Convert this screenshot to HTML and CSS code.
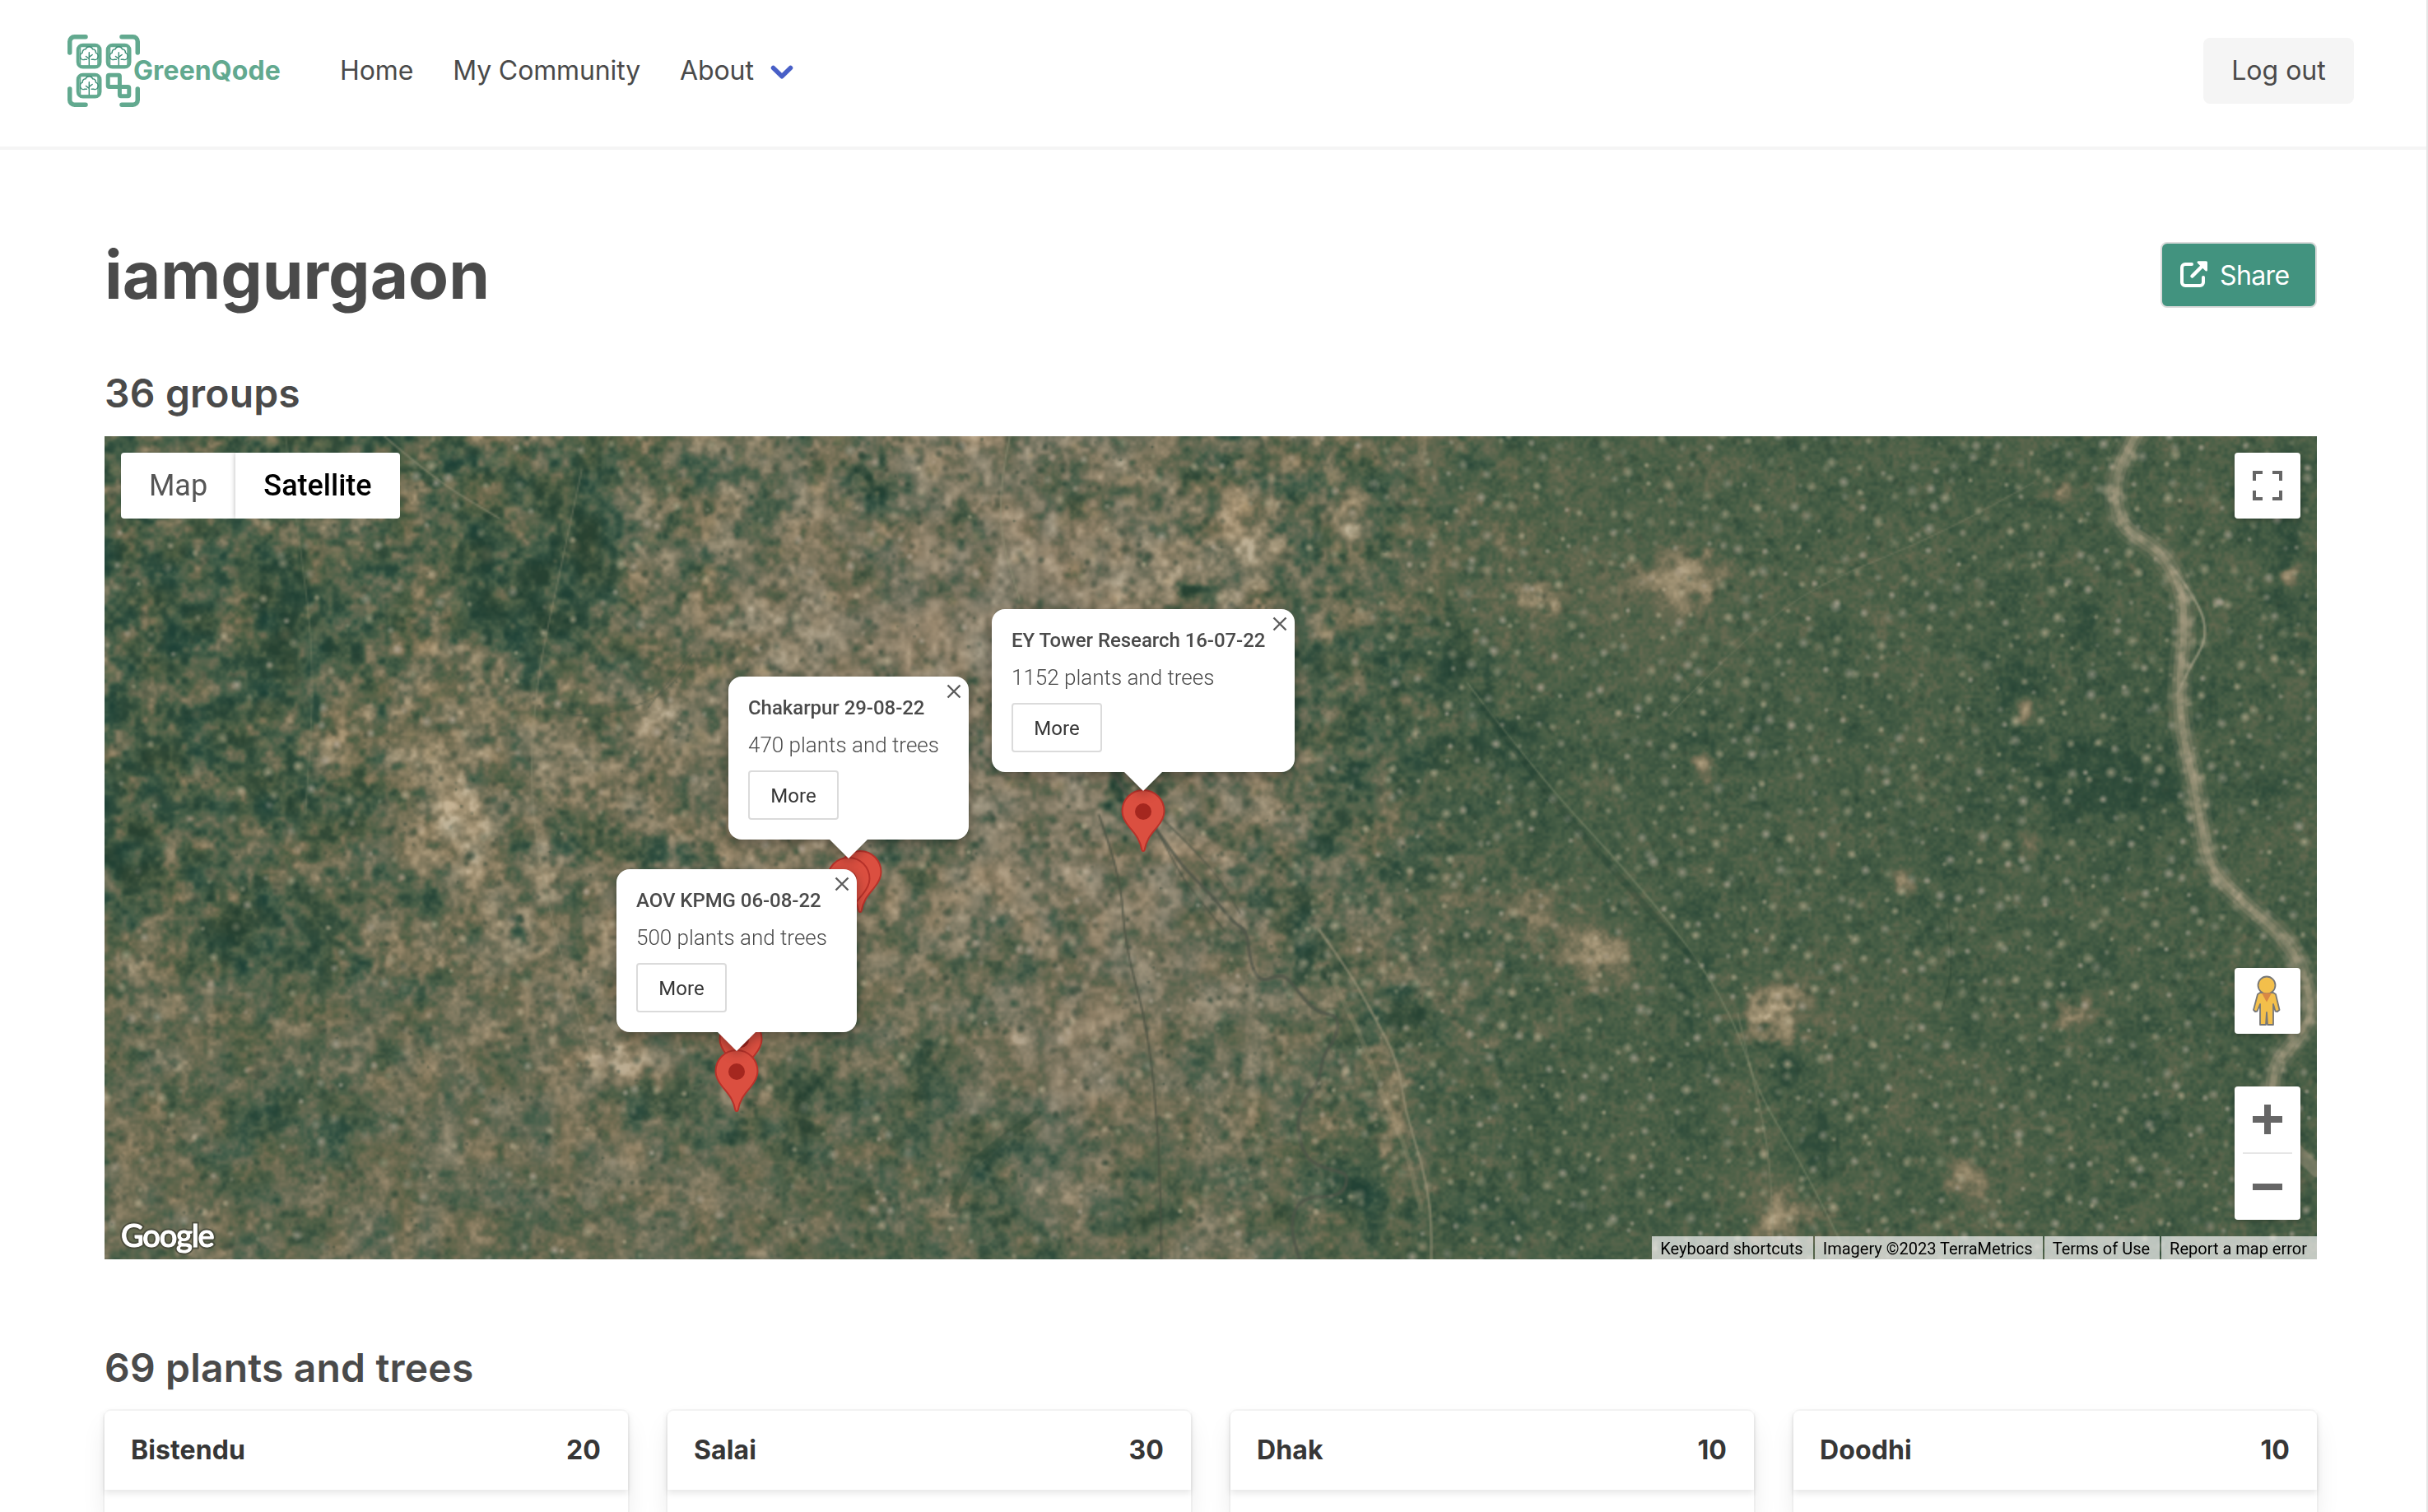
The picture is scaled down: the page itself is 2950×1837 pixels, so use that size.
FILE: index.html
```html
<!DOCTYPE html>
<html lang="en">
<head>
<meta charset="utf-8">
<title>iamgurgaon - GreenQode</title>
<link rel="stylesheet" href="styles.css">
</head>
<body>
<svg class="defs" width="0" height="0" aria-hidden="true">
  <symbol id="tree" viewBox="0 0 24 26">
    <path d="M12 25V9M12 15l4-3M12 17l-4-3M9 18H6.500a4.500 4.500 0 0 1-3-8.500A4.500 4.500 0 0 1 7.500 5a4.800 4.800 0 0 1 9 0 4.500 4.500 0 0 1 4 4.500A4.500 4.500 0 0 1 17.500 18H15" fill="none" stroke="#3f8f78" stroke-width="1.500"/>
  </symbol>
  <symbol id="pin" viewBox="0 0 54 76">
    <path d="M27 1C12.500 1 1.500 12.500 1.500 26.500c0 7.500 3.200 12.500 8 18.500C17 54.500 23 60 25.300 73.500c.4 2 3 2 3.400 0C31 60 37 54.500 44.500 45c4.800-6 8-11 8-18.500C52.500 12.500 41.500 1 27 1z" fill="#db4f40" stroke="#b8322a" stroke-width="2"/>
    <circle cx="27" cy="27" r="10" fill="#a5271f"/>
  </symbol>
  <symbol id="cross" viewBox="0 0 18 18">
    <path d="M1.500 1.500l15 15M16.500 1.500l-15 15" stroke="#5c5c5c" stroke-width="2.400" fill="none"/>
  </symbol>
</svg>

<nav class="navbar">
  <a class="brand">
    <svg class="brand-mark" viewBox="0 0 88 88" fill="none" stroke="#62a98f" stroke-width="5.500" stroke-linecap="round">
      <path d="M2.750 22V8.500a5.750 5.750 0 0 1 5.750-5.750H22M66 2.750h13.500a5.750 5.750 0 0 1 5.750 5.750V22M85.250 66v13.500a5.750 5.750 0 0 1-5.750 5.750H66M22 85.250H8.500a5.750 5.750 0 0 1-5.750-5.750V66"/>
      <g stroke-width="4">
        <rect x="12.700" y="12.700" width="26.800" height="26.800" rx="6"/>
        <rect x="48.700" y="12.700" width="26.800" height="26.800" rx="6"/>
        <rect x="12.700" y="48.700" width="26.800" height="26.800" rx="6"/>
      </g>
      <g stroke-width="1.500">
        <rect x="15.500" y="14.500" width="21.500" height="23.500"/>
        <rect x="51.500" y="14.500" width="21.500" height="23.500"/>
        <rect x="15.500" y="50.500" width="21.500" height="23.500"/>
      </g>
      <rect x="49.200" y="49.200" width="14.200" height="14.200" rx="1.500" stroke-width="5"/>
      <rect x="63.400" y="63.400" width="11.400" height="11.400" rx="1.500" stroke-width="5"/>
      <use href="#tree" x="14.800" y="13" width="23" height="25"/>
      <use href="#tree" x="50.800" y="13" width="23" height="25"/>
      <use href="#tree" x="14.800" y="49" width="23" height="25"/>
    </svg>
    <span class="brand-name">GreenQode</span>
  </a>
  <div class="nav-links">
    <a>Home</a>
    <a>My Community</a>
    <a class="dropdown">About
      <svg viewBox="0 0 28 18"><path d="M3.500 3.500L14 13.800 24.500 3.500" fill="none" stroke="#485fc7" stroke-width="5.500" stroke-linecap="round" stroke-linejoin="round"/></svg>
    </a>
  </div>
  <button class="logout">Log out</button>
</nav>

<main class="page">
  <header class="title-row">
    <h1>iamgurgaon</h1>
    <button class="share">
      <svg viewBox="0 0 34 34"><path d="M14 4H6a4 4 0 0 0-4 4v18a4 4 0 0 0 4 4h18a4 4 0 0 0 4-4v-6" fill="none" stroke="#fff" stroke-width="4" stroke-linecap="round"/><path d="M14.500 18.500L26 7" stroke="#fff" stroke-width="4.500" stroke-linecap="round"/><path d="M22 .2h9.500a1.500 1.500 0 0 1 1.500 1.500V11c0 1.500-1.600 2-2.500 1.100L21 2.700C20 1.700 20.700.2 22 .2z" fill="#fff"/></svg>
      <span>Share</span>
    </button>
  </header>

  <h2 class="groups">36 groups</h2>
  <section class="map">
    <canvas class="imagery" id="imagery" width="1344" height="500"></canvas>

    <svg class="pin" style="left:891px;top:503px"><use href="#pin"/></svg>
    <svg class="pin" style="left:877px;top:511px"><use href="#pin"/></svg>
    <svg class="pin" style="left:746px;top:706px"><use href="#pin"/></svg>
    <svg class="pin" style="left:741px;top:745px"><use href="#pin"/></svg>
    <svg class="pin" style="left:1235px;top:429px"><use href="#pin"/></svg>

    <article class="info" style="left:1078px;top:210px;width:368px">
      <h3>EY Tower Research 16-07-22</h3><p>1152 plants and trees</p><button>More</button>
      <svg class="close"><use href="#cross"/></svg>
    </article>
    <article class="info" style="left:758px;top:292px;width:292px">
      <h3>Chakarpur 29-08-22</h3><p>470 plants and trees</p><button>More</button>
      <svg class="close"><use href="#cross"/></svg>
    </article>
    <article class="info" style="left:622px;top:526px;width:292px">
      <h3>AOV KPMG 06-08-22</h3><p>500 plants and trees</p><button>More</button>
      <svg class="close"><use href="#cross"/></svg>
    </article>

    <div class="map-type"><span>Map</span><span class="active">Satellite</span></div>
    <div class="control fullscreen">
      <svg viewBox="0 0 36 36" width="36" height="36"><path d="M2 12V2h10M24 2h10v10M34 24v10H24M12 34H2V24" fill="none" stroke="#666" stroke-width="4"/></svg>
    </div>
    <div class="control pegman">
      <svg viewBox="0 0 34 62" width="34" height="62">
        <path d="M9 21h16l3 2 4.500 19-2.500 2-2.500-.5L25 35v25h-7l-1-15-1 15H9V35l-3.500 8.500-2.500.5-2-2L6 23z" fill="#f3bf4b" stroke="#777" stroke-width="1.800" stroke-linejoin="round"/>
        <circle cx="17" cy="12" r="10.500" fill="#f3bf4b" stroke="#777" stroke-width="1.800"/>
        <path d="M11 21.500h12l-6 11z" fill="#d98844"/>
      </svg>
    </div>
    <div class="control zoom">
      <svg viewBox="0 0 36 36" width="36" height="36"><path d="M18 0v36M0 18h36" stroke="#666" stroke-width="8"/></svg>
      <hr>
      <svg viewBox="0 0 36 36" width="36" height="36"><path d="M0 18h36" stroke="#666" stroke-width="8"/></svg>
    </div>
    <div class="watermark">Google</div>
    <div class="attribution"><span>Keyboard shortcuts</span><span>Imagery ©2023 TerraMetrics</span><span>Terms of Use</span><span>Report a map error</span></div>
  </section>

  <h2 class="plants">69 plants and trees</h2>
  <section class="cards">
    <article class="card"><header><span>Bistendu</span><span>20</span></header></article>
    <article class="card"><header><span>Salai</span><span>30</span></header></article>
    <article class="card"><header><span>Dhak</span><span>10</span></header></article>
    <article class="card"><header><span>Doodhi</span><span>10</span></header></article>
  </section>
</main>
<script src="imagery.js"></script>
</body>
</html>
```

FILE: styles.css
```css
* { box-sizing: border-box; }
body {
  margin: 0;
  height: 1837px;
  overflow: hidden;
  border-right: 2px solid #e6e6e6;
  background: #fff;
  color: #4a4a4a;
  font-family: Inter, "Liberation Sans", sans-serif;
  font-size: 32px;
}
.defs { position: absolute; }
h1, h2, h3, p { margin: 0; }
button { font: inherit; color: inherit; margin: 0; }

.navbar {
  display: flex;
  align-items: center;
  height: 182px;
  padding: 0 88px 6px 82px;
  border-bottom: 4px solid #f5f5f5;
}
.brand { display: flex; align-items: center; width: 331px; }
.brand-mark { width: 88px; height: 88px; flex: none; }
.brand-name { margin-left: -8px; padding-bottom: 2px; font-weight: 700; letter-spacing: .1px; color: #62a98f; }
.nav-links { display: flex; gap: 48px; flex: 1; padding-bottom: 2px; letter-spacing: -.12px; }
.dropdown { display: flex; align-items: center; gap: 20px; }
.dropdown svg { width: 28px; height: 18px; margin-top: 6px; }
.logout {
  width: 183px;
  height: 80px;
  padding: 0 0 2px;
  border: 0;
  border-radius: 8px;
  background: #f5f5f5;
}

.page { padding: 112px 133px 0 127px; }
.title-row { display: flex; align-items: center; justify-content: space-between; height: 80px; }
h1 { font-size: 80px; line-height: 80px; font-weight: 700; }
h2 { font-size: 48px; line-height: 61px; font-weight: 600; margin-bottom: 22px; letter-spacing: .18px; }
.groups { margin-top: 73px; }
.plants { margin-top: 101px; }
.share {
  display: flex;
  align-items: center;
  gap: 14px;
  width: 190px;
  height: 80px;
  padding: 0 0 0 22px;
  border: 2px solid #dbdbdb;
  border-radius: 8px;
  background: #42937f;
  color: #fff;
  letter-spacing: -.6px;
}
.share svg { width: 34px; height: 34px; }

.map {
  position: relative;
  height: 1000px;
  overflow: hidden;
  background: #56664c;
  font-family: Roboto, "Liberation Sans", sans-serif;
}
.imagery { display: block; width: 100%; height: 100%; }
.pin { position: absolute; width: 54px; height: 76px; }
.info {
  position: absolute;
  height: 198px;
  padding: 24px;
  border-radius: 16px;
  background: #fff;
  filter: drop-shadow(0 4px 7px rgba(0, 0, 0, .35));
}
.info::after {
  content: "";
  position: absolute;
  left: calc(50% - 24px);
  top: 100%;
  margin-top: -1px;
  border: 24px solid transparent;
  border-top-color: #fff;
  border-bottom: 0;
}
.info h3 { font-size: 24px; line-height: 28px; font-weight: 500; letter-spacing: -.05px; white-space: nowrap; }
.info p { margin: 13px 0; font-size: 26px; line-height: 36px; font-weight: 300; white-space: nowrap; }
.info button {
  display: block;
  width: 110px;
  height: 60px;
  padding: 2px 0 0;
  border: 2px solid #dbdbdb;
  border-radius: 4px;
  background: #fff;
  color: #363636;
  font-size: 24px;
}
.close { position: absolute; right: 9px; top: 9px; width: 18px; height: 18px; }

.map-type {
  position: absolute;
  left: 20px;
  top: 20px;
  display: flex;
  height: 80px;
  border-radius: 4px;
  overflow: hidden;
  background: #fff;
  font-size: 36px;
  line-height: 80px;
  color: #565656;
}
.map-type span { width: 139px; text-align: center; }
.map-type .active { width: 200px; color: #000; font-weight: 500; box-shadow: 0 0 6px rgba(0, 0, 0, .3); }
.control {
  position: absolute;
  right: 20px;
  width: 80px;
  height: 80px;
  display: flex;
  align-items: center;
  justify-content: center;
  border-radius: 4px;
  background: #fff;
  box-shadow: 0 2px 6px rgba(0, 0, 0, .25);
}
.fullscreen { top: 20px; }
.pegman { top: 646px; padding-right: 2px; }
.zoom { top: 790px; height: 162px; flex-direction: column; justify-content: space-between; padding: 22px 0; }
.zoom hr { width: 60px; height: 2px; margin: 0; border: 0; background: #e6e6e6; }
.watermark {
  position: absolute;
  left: 20px;
  bottom: 10px;
  font: 500 38px/40px Lato, sans-serif;
  letter-spacing: -1.2px;
  color: #fff;
  -webkit-text-stroke: 5px rgba(70, 72, 58, .85);
  paint-order: stroke fill;
}
.watermark::after {
  content: "Google";
  position: absolute;
  left: 0;
  top: 0;
  -webkit-text-stroke: 1px #fff;
}
.attribution {
  position: absolute;
  right: 0;
  bottom: 0;
  display: flex;
  gap: 2px;
  font-size: 20px;
  line-height: 31px;
  height: 28px;
  overflow: hidden;
  color: #000;
}
.attribution span { padding: 0 12px 0 10px; background: rgba(245, 245, 245, .7); white-space: nowrap; }

.cards { display: grid; grid-template-columns: repeat(4, 1fr); gap: 48px; }
.card {
  height: 123px;
  border-radius: 8px 8px 0 0;
  background: #fff;
  box-shadow: 0 16px 32px -4px rgba(10, 10, 10, .1), 0 0 0 2px rgba(10, 10, 10, .03);
}
.card header {
  display: flex;
  align-items: center;
  justify-content: space-between;
  height: 96px;
  padding: 0 33px 1px 32px;
  font-weight: 700;
  letter-spacing: .1px;
  color: #363636;
  box-shadow: 0 4px 8px rgba(10, 10, 10, .1);
}
```

FILE: imagery.js
```js
// Procedural satellite terrain: tone grid + fractal noise, then rivers, roads and villages.
(function () {
  var canvas = document.getElementById('imagery');
  var ctx = canvas.getContext('2d');
  var W = canvas.width, H = canvas.height;

  // tone: 0 = dense vegetation, 1 = bare soil (cells of 96 x 100)
  var tone = [
    [.38,.42,.42,.46,.50,.48,.52,.56,.46,.38,.38,.36,.35,.36,.37],
    [.36,.26,.52,.34,.58,.62,.60,.56,.46,.42,.42,.38,.34,.34,.36],
    [.38,.46,.62,.58,.62,.60,.54,.54,.36,.36,.36,.35,.32,.29,.37],
    [.46,.36,.52,.56,.58,.52,.50,.56,.46,.42,.36,.36,.34,.33,.36],
    [.48,.48,.52,.53,.50,.48,.58,.50,.37,.34,.37,.39,.36,.34,.35],
    [.50,.47,.53,.53,.53,.46,.40,.52,.38,.34,.38,.38,.36,.34,.35]
  ];
  var urban = [
    [0,0,0,.1,.3,.6,.7,.3,.1,0,0,0,0,0,0],
    [0,0,0,.2,.5,.9,.9,.4,.1,0,.1,0,0,0,0],
    [0,0,.1,.3,.5,.7,.9,.7,.1,0,0,0,0,0,0],
    [.1,.1,.2,.3,.5,.5,.7,.8,.4,.1,0,0,0,0,0],
    [.2,.2,.3,.4,.4,.4,.8,.4,.1,0,0,0,0,0,0],
    [.3,.3,.3,.3,.4,.3,.4,.4,.1,0,0,0,0,0,0]
  ];
  // local darkening (-) and lightening (+): x, y, rx, ry, amount
  var blobs = [
    [95,110,34,60,-.14],[240,90,30,46,-.22],[265,130,16,50,-.16],[290,70,20,56,-.16],
    [335,255,48,14,-.3],[290,235,18,14,-.26],[150,220,34,18,-.24],[200,275,22,10,-.2],[22,270,18,40,-.22],
    [252,300,5,9,-.5],[85,300,30,32,-.22],[342,405,24,18,-.3],[388,420,24,12,-.3],[424,402,12,24,-.34],
    [415,455,12,20,-.18],[500,330,50,60,-.1],[495,400,10,50,-.22],[560,420,26,20,-.24],[535,460,22,26,-.24],
    [100,410,22,14,-.25],[145,420,16,24,-.24],[65,440,14,10,-.22],[115,485,12,12,-.24],[645,460,36,26,-.14],
    [616,218,7,18,-.6],[660,92,16,5,-.4],[465,30,18,14,-.26],[745,245,10,12,-.3],[728,282,16,14,-.28],
    [785,350,12,18,-.3],[730,320,16,18,-.18],[765,450,20,36,-.2],[810,130,22,26,-.16],[830,170,44,40,-.12],
    [965,390,14,80,-.12],[1020,385,12,28,-.2],[1040,430,12,20,-.18],[1160,155,16,18,-.2],[1205,115,14,18,-.18],
    [1210,210,40,26,-.16],[1325,80,12,46,-.2],[970,190,14,18,-.16],[995,345,10,16,-.18],[685,240,10,20,-.18],
    [960,85,20,16,.42],[868,98,14,10,.46],[755,45,10,16,.38],[1015,350,22,14,.55],[903,315,22,16,.38],
    [868,290,12,12,.34],[970,200,6,8,.5],[1165,168,7,7,.6],[1196,352,12,11,.42],[1328,88,7,7,.5],
    [1018,474,12,16,.5],[1130,450,11,12,.36],[1188,34,12,6,.45],[1092,272,8,7,.38],[1168,246,6,6,.3],
    [310,378,24,10,.5],[545,270,14,10,.22],[590,370,16,50,.2],[605,280,10,50,.18],[420,110,30,20,.18],
    [580,80,28,34,.16],[780,410,14,34,.26],[700,70,12,18,.3],[220,225,26,22,.18],[130,185,20,16,.2],
    [555,365,6,5,.45]
  ];
  var ramp = [[0,36,66,52],[.2,50,78,60],[.36,74,96,71],[.52,104,106,81],[.68,137,127,99],[.84,166,151,120],[1,198,182,152]];

  function hash(x, y) {
    var h = Math.imul(x, 374761393) + Math.imul(y, 668265263) | 0;
    h = Math.imul(h ^ (h >>> 13), 1274126177);
    return ((h ^ (h >>> 16)) >>> 0) / 4294967296;
  }
  function noise(x, y) {
    var xi = Math.floor(x), yi = Math.floor(y), u = x - xi, v = y - yi;
    u = u * u * (3 - 2 * u); v = v * v * (3 - 2 * v);
    var a = hash(xi, yi), b = hash(xi + 1, yi), c = hash(xi, yi + 1), d = hash(xi + 1, yi + 1);
    return a + (b - a) * u + (c - a) * v + (a - b - c + d) * u * v - .5;
  }
  function sample(grid, x, y) {
    var gx = x / 96, gy = y / 100, xi = Math.min(13, gx | 0), yi = Math.min(4, gy | 0);
    var u = gx - xi, v = gy - yi;
    return (grid[yi][xi] * (1 - u) + grid[yi][xi + 1] * u) * (1 - v) +
           (grid[yi + 1][xi] * (1 - u) + grid[yi + 1][xi + 1] * u) * v;
  }

  var local = new Float32Array(W * H);
  blobs.forEach(function (b) {
    var x0 = Math.max(0, b[0] - b[2] * 2.4 | 0), x1 = Math.min(W, b[0] + b[2] * 2.4 | 0);
    var y0 = Math.max(0, b[1] - b[3] * 2.4 | 0), y1 = Math.min(H, b[1] + b[3] * 2.4 | 0);
    for (var y = y0; y < y1; y++) for (var x = x0; x < x1; x++) {
      var dx = (x - b[0]) / b[2] + noise(x / 7, y / 7) * 1.2, dy = (y - b[1]) / b[3] + noise(x / 7 + 50, y / 7) * 1.2;
      local[y * W + x] += b[4] * Math.exp(-(dx * dx + dy * dy) * 1.2);
    }
  });

  var img = ctx.createImageData(W, H), data = img.data;
  for (var y = 0; y < H; y++) for (var x = 0; x < W; x++) {
    // farmland east of the city is much more even than the west
    var e = Math.max(0, Math.min(1, (x - 720) / 180));
    // the southwest and the city core are smoother than the northwest
    var calm = Math.max(0, Math.min(1, (y - 260) / 140)) * .35;
    var amp = (1 - calm * (1 - e)) * (1 - e * .68);
    var n = noise(x / 42, y / 42) * .16 + noise(x / 19 + 9, y / 19) * .26 + noise(x / 8, y / 8 + 30) * .34 +
            noise(x / 4 + 70, y / 4) * .36;
    var t = sample(tone, x, y) + local[y * W + x] + n * amp + noise(x / 1.9, y / 1.9 + 200) * .15;
    t = Math.max(0, Math.min(.999, t));
    var k = 1;
    while (ramp[k][0] < t) k++;
    var p = ramp[k - 1], q = ramp[k], f = (t - p[0]) / (q[0] - p[0]);
    var r = p[1] + (q[1] - p[1]) * f, g = p[2] + (q[2] - p[2]) * f, b = p[3] + (q[3] - p[3]) * f;
    var m = sample(urban, x, y) * .55 * Math.min(1, t * 1.5);
    var h = noise(x / 14 + 300, y / 14) * 12 * (1 - e);
    var l = 128 + n * 70;
    var i = (y * W + x) * 4;
    data[i] = r + (l + 6 - r) * m + h;
    data[i + 1] = g + (l - 4 - g) * m;
    data[i + 2] = b + (l - 18 - b) * m - h * .6;
    data[i + 3] = 255;
  }
  ctx.putImageData(img, 0, 0);

  var seed = 7;
  function rnd() { seed = (Math.imul(seed, 1664525) + 1013904223) | 0; return (seed >>> 0) / 4294967296; }
  function speck(x, y, r, color, a) {
    var g = ctx.createRadialGradient(x, y, 0, x, y, r);
    g.addColorStop(0, 'rgba(' + color + ',' + a + ')');
    g.addColorStop(.4, 'rgba(' + color + ',' + a * .6 + ')');
    g.addColorStop(1, 'rgba(' + color + ',0)');
    ctx.fillStyle = g;
    ctx.fillRect(x - r, y - r, r * 2, r * 2);
  }
  // villages
  for (var vy = 4; vy < H; vy += 13) for (var vx = 4; vx < W; vx += 14) {
    var px = vx + (rnd() - .5) * 13, py = vy + (rnd() - .5) * 13, size = 1.8 + rnd() * 2.4, a = .25 + rnd() * .5;
    if (px < 760 + 60 * rnd() && rnd() > .35) continue;
    speck(px, py, size, rnd() > .5 ? '190,178,148' : '186,174,158', a);
    if (rnd() > .6) speck(px + 7, py + 4, 3, '36,60,46', .45);
  }
  // trees and ponds across the west
  for (var s = 0; s < 1700; s++) speck(rnd() * 800, rnd() * H, 1.2 + rnd() * 2.8, '38,64,50', .25 + rnd() * .35);

  function line(points, width, color) {
    ctx.beginPath();
    ctx.moveTo(points[0], points[1]);
    for (var i = 2; i < points.length - 2; i += 2) {
      ctx.quadraticCurveTo(points[i], points[i + 1], (points[i] + points[i + 2]) / 2, (points[i + 1] + points[i + 3]) / 2);
    }
    ctx.lineTo(points[points.length - 2], points[points.length - 1]);
    ctx.lineWidth = width;
    ctx.strokeStyle = color;
    ctx.lineCap = ctx.lineJoin = 'round';
    ctx.stroke();
  }
  // eastern river
  var river = [1236,-4,1223,18,1221,38,1226,56,1250,70,1262,92,1264,120,1260,150,1262,180,1270,212,1274,240,1280,264,1300,284,1324,304,1336,325,1342,350,1330,368,1318,382,1316,410];
  line(river, 15, 'rgba(120,122,98,.25)');
  line(river, 9, 'rgba(140,135,110,.5)');
  line(river, 4, 'rgba(168,157,130,.55)');
  line([1255,78,1272,100,1278,122,1266,142,1260,155], 1.6, 'rgba(176,168,144,.6)');
  line([1316,410,1322,425,1344,446], 8, 'rgba(150,142,118,.6)');
  for (var j = 0; j < river.length - 2; j += 2) for (var c = 0; c < 22; c++) {
    var w = rnd();
    speck(river[j] + (river[j + 2] - river[j]) * w + (rnd() - .5) * 12, river[j + 1] + (river[j + 3] - river[j + 1]) * w + (rnd() - .5) * 8,
      1.5 + rnd() * 3, rnd() > .45 ? '184,170,144' : '84,100,78', .35);
  }
  // canals and roads
  line([828,150,870,205,930,270,970,320,992,360,1005,400,1030,440,1060,500], 1.2, 'rgba(130,140,110,.5)');
  line([838,165,880,222,940,290,966,318], 4, 'rgba(34,64,48,.35)');
  line([992,350,1004,400,1012,440,1014,500], 1.2, 'rgba(140,140,112,.4)');
  line([1172,28,1120,58,1040,90,1000,120,950,170], 1, 'rgba(140,138,112,.35)');
  line([1120,290,1124,320,1116,350], 1, 'rgba(34,60,46,.4)');
  line([110,0,118,60,128,140,122,230], 1, 'rgba(135,140,110,.35)');
  line([290,20,275,90,262,150,258,220,270,290,296,380], 1, 'rgba(150,145,118,.4)');
  line([170,0,200,26,240,50], 1.2, 'rgba(150,145,120,.5)');
  line([550,0,540,45,556,100], 1.2, 'rgba(150,145,120,.5)');
  line([604,230,617,265,620,310,634,360,641,430,642,500], 1.3, 'rgba(72,80,66,.7)');
  line([628,215,650,262,668,285,680,300], 1.2, 'rgba(72,80,66,.6)');
  line([642,232,672,260,690,290], 1.2, 'rgba(80,86,72,.6)');
  line([330,165,350,140,360,128,340,160,290,172,270,165], 1, 'rgba(70,86,70,.5)');
  // winding river through the city
  line([590,170,606,190,618,215,640,240,655,262,672,278,686,296,694,300,696,320,702,332,716,326,724,336,736,350,750,352,748,366,740,376,738,392,728,404,724,420,730,440,746,446,756,448,752,462,726,462,720,480,726,500], 2, 'rgba(78,84,72,.75)');
  line([738,300,756,325,770,350,786,380,790,410,800,440,806,470,806,500], 1.6, 'rgba(160,152,124,.55)');
  line([746,330,764,365,776,400,790,430,800,470], 3, 'rgba(176,160,128,.25)');
  // Aravalli ridge at the southern edge
  line([515,470,522,446,548,425,566,412], 5, 'rgba(34,66,48,.35)');
  for (var d = 0; d < 170; d++) speck(660 + rnd() * 130, 250 + rnd() * 220, 1.5 + rnd() * 3, '190,174,146', .35);
  for (var o = 0; o < 260; o++) speck(rnd() * 760, rnd() * 230, 2 + rnd() * 5, '186,158,114', .28);
})();
```
